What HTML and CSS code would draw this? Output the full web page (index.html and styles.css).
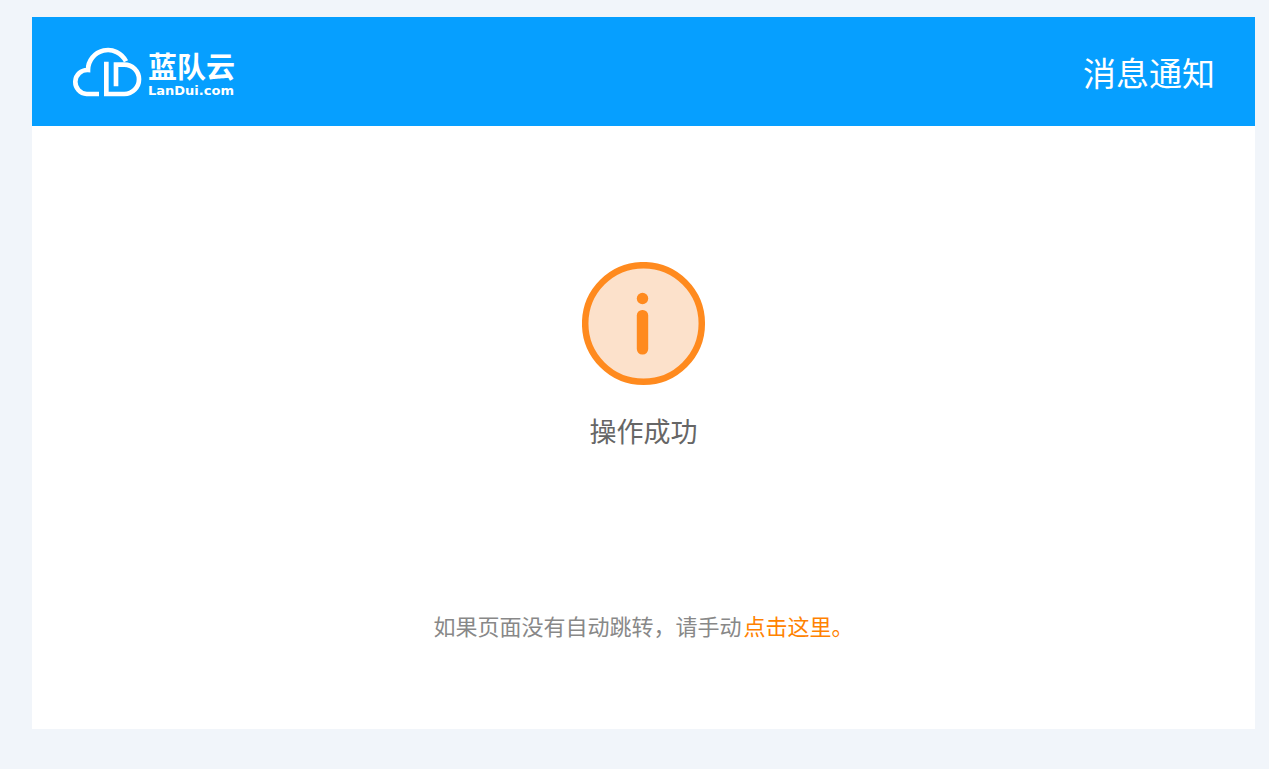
FILE: index.html
```html
<!DOCTYPE html>
<html lang="zh-CN">
<head>
    <meta charset="UTF-8">
    <meta name="viewport" content="width=device-width, initial-scale=1.0">
    <title>消息通知</title>
    <link rel="stylesheet" href="styles.css">
</head>
<body>
    <div class="container">
        <header class="header">
            <div class="logo">
                <svg class="logo-icon" viewBox="36 35 210 150" aria-hidden="true">
                    <path d="M198 78 A60 60 0 0 0 84 104 A36 36 0 0 0 80 176 H117"/>
                    <path d="M139 79 V176 H193 A44 44 0 0 0 193 88 H168 V153"/>
                </svg>
                <div class="logo-text">
                    <span class="logo-name">蓝队云</span>
                    <span class="logo-domain">LanDui.com</span>
                </div>
            </div>
            <h1>消息通知</h1>
        </header>

        <main class="content">
            <svg class="info-icon" viewBox="0 0 124 124" aria-hidden="true">
                <circle class="info-ring" cx="61.5" cy="61.5" r="58.3"/>
                <circle class="info-mark" cx="60.5" cy="36.5" r="5.7"/>
                <rect class="info-mark" x="54.8" y="48" width="11.4" height="44.5" rx="5.4"/>
            </svg>
            <p class="message">操作成功</p>
            <p class="jump">如果页面没有自动跳转，请手动<a href="#">点击这里。</a></p>
        </main>
    </div>
</body>
</html>
```

FILE: styles.css
```css
body {
    margin: 0;
    padding: 17px 14px 40px 32px;
    background-color: #f1f5fa;
    font-family: "Noto Sans CJK SC", sans-serif;
}

.container {
    background-color: #fff;
}

.header {
    display: flex;
    justify-content: space-between;
    align-items: center;
    height: 109px;
    padding: 0 40px;
    background-color: #069fff;
    color: #fff;
}

h1 {
    margin: 0;
    font-size: 33px;
    font-weight: 400;
    line-height: 46px;
}

.logo {
    display: flex;
    align-items: center;
    gap: 6px;
}

.logo-icon {
    width: 70px;
    height: 50px;
    fill: none;
    stroke: #fff;
    stroke-width: 14;
}

.logo-text {
    display: flex;
    flex-direction: column;
}

.logo-name {
    font-size: 29px;
    font-weight: bold;
    line-height: 38px;
}

.logo-domain {
    font-family: "DejaVu Sans", sans-serif;
    font-size: 13px;
    font-weight: bold;
    line-height: 14px;
}

.content {
    display: flex;
    flex-direction: column;
    align-items: center;
    padding: 136px 20px 88px;
}

.info-icon {
    width: 124px;
    height: 124px;
}

.info-ring {
    fill: #fce1cb;
    stroke: #ff8a1e;
    stroke-width: 6.5;
}

.info-mark {
    fill: #ff8a1e;
}

.message {
    margin: 25px 0 0;
    color: #666;
    font-size: 27px;
    font-weight: 400;
    line-height: 40px;
}

.jump {
    margin: 158px 0 0;
    color: #888;
    font-size: 22px;
    font-weight: 400;
    line-height: 32px;
}

.jump a {
    margin-left: 2px;
    color: #ff8200;
    text-decoration: none;
}

.jump a:hover {
    text-decoration: underline;
}
```
